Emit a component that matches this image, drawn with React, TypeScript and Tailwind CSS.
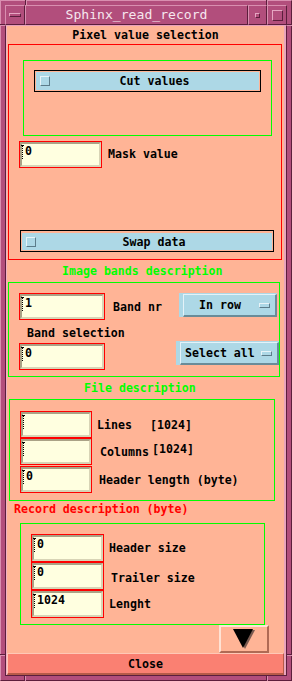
import React from "react";

const B = "font-['DejaVu_Sans_Mono',monospace] font-bold text-[11.6px] leading-[14px] whitespace-pre";

function Field({ cls, value }: { cls: string; value: string }) {
  return (
    <div className={`box-border shrink-0 border border-[#ff0000] ${cls}`}>
      <div className="relative box-border h-full w-full border-2 border-t-[#aaa286] border-l-[#aaa286] border-r-[#d8d4b6] border-b-[#d8d4b6] bg-[#ffffe0]">
        <div className="absolute left-0 top-[1px] h-[14px] border-l border-dotted border-black" />
        <div className="absolute left-[-1px] top-[1px] h-[1px] w-[3px] bg-black" />
        <span className={`absolute left-[3px] top-0 text-black ${B}`}>{value}</span>
      </div>
    </div>
  );
}

function Check() {
  return (
    <div className="box-border h-[10px] w-[10px] shrink-0 border border-t-[#e6f3f8] border-l-[#e6f3f8] border-r-[#5c7c8a] border-b-[#5c7c8a] bg-[#add8e6]" />
  );
}

function Menu({ cls, label, text }: { cls: string; label: string; text: string }) {
  return (
    <div className={`box-border shrink-0 bg-[#add8e6] pt-[1px] ${cls}`}>
      <div className="box-border flex h-full items-center border-l border-t border-b-2 border-r-2 border-l-[#e4f2f8] border-t-[#e4f2f8] border-r-[#6a8c98] border-b-[#6a8c98]">
        <span className={`text-black ${B} ${text}`}>{label}</span>
        <div className="ml-auto mr-[5px] box-border h-[5px] w-[11px] border border-t-[#e8f4f8] border-l-[#e8f4f8] border-r-[#5c7c8a] border-b-[#5c7c8a] bg-[#add8e6]" />
      </div>
    </div>
  );
}

export default function App() {
  return (
    <div className="relative box-border flex h-[681px] w-[292px] flex-col border border-t-[#d98fb0] border-l-[#d98fb0] border-r-[#5c1e3c] border-b-[#5c1e3c] bg-[#b24e7c] px-[4px] pt-[4px] pb-[4px]">
      {/* frame corner marks */}
      <div className="absolute left-[24px] top-[-1px] h-[5px] w-[1px] bg-[#5c1e3c]" />
      <div className="absolute left-[25px] top-[-1px] h-[5px] w-[1px] bg-[#d98fb0]" />
      <div className="absolute left-[265px] top-[-1px] h-[5px] w-[1px] bg-[#5c1e3c]" />
      <div className="absolute left-[266px] top-[-1px] h-[5px] w-[1px] bg-[#d98fb0]" />
      <div className="absolute left-[-1px] top-[23px] h-[1px] w-[5px] bg-[#5c1e3c]" />
      <div className="absolute left-[-1px] top-[24px] h-[1px] w-[5px] bg-[#d98fb0]" />
      <div className="absolute right-[-1px] top-[23px] h-[1px] w-[5px] bg-[#5c1e3c]" />
      <div className="absolute right-[-1px] top-[24px] h-[1px] w-[5px] bg-[#d98fb0]" />
      <div className="absolute left-[-1px] top-[653px] h-[1px] w-[5px] bg-[#5c1e3c]" />
      <div className="absolute left-[-1px] top-[654px] h-[1px] w-[5px] bg-[#d98fb0]" />
      <div className="absolute right-[-1px] top-[653px] h-[1px] w-[5px] bg-[#5c1e3c]" />
      <div className="absolute right-[-1px] top-[654px] h-[1px] w-[5px] bg-[#d98fb0]" />
      <div className="absolute left-[23px] bottom-[-1px] h-[5px] w-[1px] bg-[#5c1e3c]" />
      <div className="absolute left-[24px] bottom-[-1px] h-[5px] w-[1px] bg-[#d98fb0]" />
      <div className="absolute left-[265px] bottom-[-1px] h-[5px] w-[1px] bg-[#5c1e3c]" />
      <div className="absolute left-[266px] bottom-[-1px] h-[5px] w-[1px] bg-[#d98fb0]" />

      {/* title bar */}
      <div className="flex h-[20px] shrink-0">
        <div className="box-border flex h-full w-[20px] items-center justify-center border border-t-[#d98fb0] border-l-[#d98fb0] border-r-[#5c1e3c] border-b-[#5c1e3c]">
          <div className="box-border h-[4px] w-[12px] border border-t-[#e6a6c2] border-l-[#e6a6c2] border-r-[#5c1e3c] border-b-[#5c1e3c]" />
        </div>
        <div className="box-border flex h-full flex-1 items-center justify-center border border-t-[#d98fb0] border-l-[#d98fb0] border-r-[#5c1e3c] border-b-[#5c1e3c]">
          <span className="font-['DejaVu_Sans_Mono',monospace] text-[13.1px] leading-[16px] text-[#f6e6ee]">Sphinx_read_record</span>
        </div>
        <div className="box-border flex h-full w-[19px] items-center justify-center border border-t-[#d98fb0] border-l-[#d98fb0] border-r-[#5c1e3c] border-b-[#5c1e3c]">
          <div className="box-border h-[5px] w-[5px] border border-t-[#e6a6c2] border-l-[#e6a6c2] border-r-[#5c1e3c] border-b-[#5c1e3c]" />
        </div>
        <div className="box-border flex h-full w-[20px] items-center justify-center border border-t-[#d98fb0] border-l-[#d98fb0] border-r-[#5c1e3c] border-b-[#5c1e3c]">
          <div className="box-border h-[11px] w-[11px] border border-t-[#e6a6c2] border-l-[#e6a6c2] border-r-[#5c1e3c] border-b-[#5c1e3c]" />
        </div>
      </div>

      {/* content */}
      <div className="box-border flex-1 border border-t-[#e8a0bc] border-l-[#5c1e3c] border-r-[#5c1e3c] border-b-[#5c1e3c]">
        <div className="box-border h-full border-l border-r-2 border-l-[#f0b0c4] border-r-[#e9a4bc]">
          <div className="flex h-full flex-col bg-[#ffb496]">
            {/* Pixel value selection */}
            <div className="flex h-[18px] shrink-0 items-center justify-center">
              <span className={`text-black ${B}`}>Pixel value selection</span>
            </div>
            <div className="ml-[1px] box-border flex h-[216px] w-[274px] shrink-0 flex-col bg-[#ff0000] p-[1px]">
              <div className="flex h-full w-full flex-col bg-[#ffb496]">
                <div className="ml-[14px] mt-[15px] h-[76px] w-[249px] shrink-0 bg-[#00ff00] p-[1px]">
                  <div className="h-full w-full overflow-hidden bg-[#ffb496]">
                    <div className="ml-[10px] mt-[9px] box-border h-[22px] w-[227px] border border-black p-[1px]">
                      <div className="flex h-full items-center bg-[#add8e6] pl-[4px]">
                        <Check />
                        <span className={`flex-1 text-center text-black ${B}`}>Cut values</span>
                      </div>
                    </div>
                  </div>
                </div>
                <div className="ml-[10px] mt-[5px] flex h-[27px] shrink-0 items-center">
                  <Field cls="w-[83px] h-[27px]" value="0" />
                  <span className={`ml-[6px] mb-[2px] text-black ${B}`}>Mask value</span>
                </div>
                <div className="ml-[11px] mt-[62px] box-border h-[22px] w-[254px] shrink-0 border border-black px-[1px] pt-[2px] pb-[1px]">
                  <div className="flex h-full items-center bg-[#add8e6] pl-[4px]">
                    <Check />
                    <span className={`flex-1 text-center text-black ${B}`}>Swap data</span>
                  </div>
                </div>
              </div>
            </div>

            {/* Image bands description */}
            <div className="flex h-[22px] shrink-0 items-center pl-[55px]">
              <span className={`text-[#00ff00] ${B}`}>Image bands description</span>
            </div>
            <div className="ml-[1px] box-border flex h-[95px] w-[272px] shrink-0 flex-col border border-[#00ff00]">
              <div className="mt-[10px] flex h-[27px] shrink-0 items-start">
                <Field cls="ml-[10px] w-[86px] h-[27px]" value="1" />
                <span className={`ml-[8px] self-center text-black ${B}`}>Band nr</span>
                <Menu cls="ml-auto mr-[2px] w-[98px] h-[24px] pl-[4px]" label="In row" text="ml-[15px]" />
              </div>
              <div className="flex h-[21px] shrink-0 items-start pl-[18px] pt-[6px]">
                <span className={`text-black ${B}`}>Band selection</span>
              </div>
              <div className="flex h-[30px] shrink-0 items-start">
                <Field cls="ml-[10px] mt-[2px] w-[86px] h-[27px]" value="0" />
                <Menu cls="ml-auto w-[103px] h-[24px] pl-[4px]" label="Select all" text="ml-[4px]" />
              </div>
            </div>

            {/* File description */}
            <div className="flex h-[22px] shrink-0 items-center pl-[77px]">
              <span className={`text-[#00ff00] ${B}`}>File description</span>
            </div>
            <div className="ml-[2px] box-border flex h-[102px] w-[266px] shrink-0 flex-col border border-[#00ff00] pt-[11px]">
              <div className="ml-[10px] flex h-[27px] shrink-0 items-center">
                <Field cls="w-[72px] h-[27px]" value="" />
                <span className={`ml-[5px] w-[53px] text-black ${B}`}>Lines</span>
                <span className={`text-black ${B}`}>[1024]</span>
              </div>
              <div className="ml-[10px] flex h-[27px] shrink-0 items-center">
                <Field cls="w-[72px] h-[27px]" value="" />
                <span className={`ml-[8px] w-[52px] text-black ${B}`}>Columns</span>
                <span className={`mb-[5px] text-black ${B}`}>[1024]</span>
              </div>
              <div className="ml-[10px] mt-[1px] flex h-[27px] shrink-0 items-center">
                <Field cls="w-[72px] h-[27px]" value="0" />
                <span className={`ml-[7px] text-black ${B}`}>Header length (byte)</span>
              </div>
            </div>

            {/* Record description */}
            <div className="flex h-[22px] shrink-0 items-start pl-[7px] pt-[1px]">
              <span className={`text-[#ff0000] ${B}`}>Record description (byte)</span>
            </div>
            <div className="ml-[13px] box-border flex h-[102px] w-[245px] shrink-0 flex-col border border-[#00ff00] pt-[10px]">
              <div className="ml-[10px] flex h-[28px] shrink-0 items-center">
                <Field cls="w-[73px] h-[28px]" value="0" />
                <span className={`ml-[5px] text-black ${B}`}>Header size</span>
              </div>
              <div className="ml-[10px] flex h-[28px] shrink-0 items-center">
                <Field cls="w-[73px] h-[28px]" value="0" />
                <span className={`ml-[7px] mt-[3px] text-black ${B}`}>Trailer size</span>
              </div>
              <div className="ml-[10px] flex h-[28px] shrink-0 items-center">
                <Field cls="w-[73px] h-[28px]" value="1024" />
                <span className={`ml-[5px] text-black ${B}`}>Lenght</span>
              </div>
            </div>

            {/* arrow button */}
            <div className="ml-[212px] box-border flex h-[28px] w-[50px] shrink-0 items-center justify-center border-2 border-t-[#ffe2d4] border-l-[#ffe2d4] border-r-[#b06a54] border-b-[#b06a54]">
              <svg width="23" height="21" viewBox="0 0 23 21" className="ml-[1px]">
                <polygon points="2,1 22,1 12,20" fill="#7a5a50" />
                <polygon points="0,0 20,0 10,19" fill="#000000" />
              </svg>
            </div>

            {/* Close */}
            <div className="box-border flex h-[22px] w-full shrink-0 items-center justify-center border border-b-2 border-t-[#ffc8b6] border-l-[#ffc8b6] border-r-[#b65a48] border-b-[#b65a48] bg-[#fa8072]">
              <span className={`text-black ${B}`}>Close</span>
            </div>
          </div>
        </div>
      </div>
    </div>
  );
}
